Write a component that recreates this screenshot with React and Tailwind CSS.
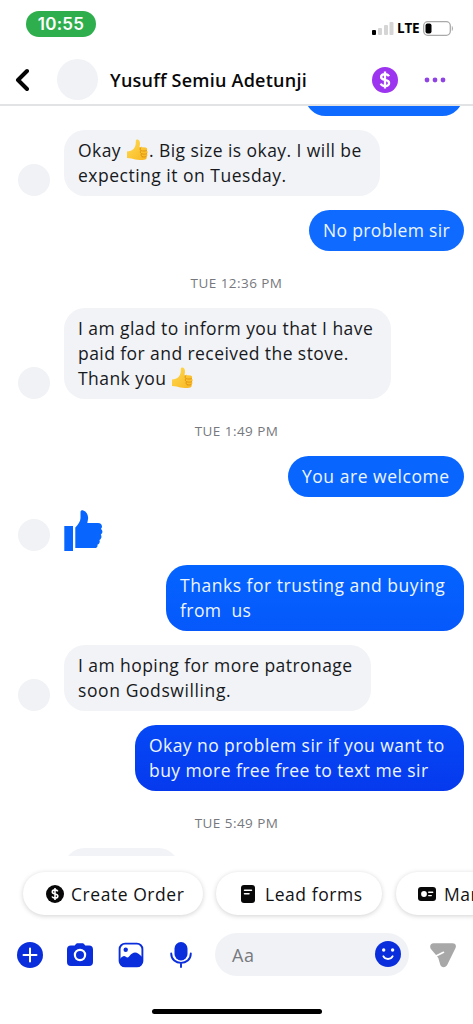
import clsx from 'clsx'

const thread = [
  { from: 'them', width: 'w-[316px]', gap: 'mt-[14px]', lines: [
    { text: 'Okay ', thumb: true, after: '. Big size is okay. I will be' },
    { text: 'expecting it on Tuesday.', tracking: 'tracking-[0.5px]' },
  ] },
  { from: 'me', width: 'w-[155px]', gap: 'mt-[14px]', color: 'bg-[#0f6bff]', lines: [
    { text: 'No problem sir', tracking: 'tracking-[0.34px]' },
  ] },
  { time: 'TUE 12:36 PM' },
  { from: 'them', width: 'w-[327px]', lines: [
    { text: 'I am glad to inform you that I have' },
    { text: 'paid for and received the stove.' },
    { text: 'Thank you ', thumb: true },
  ] },
  { time: 'TUE 1:49 PM' },
  { from: 'me', width: 'w-[176px]', color: 'bg-[#0866ff]', lines: [
    { text: 'You are welcome', tracking: 'tracking-[0.53px]' },
  ] },
  { like: true },
  { from: 'me', width: 'w-[298px]', gap: 'mt-[14px]', color: 'bg-linear-to-b from-[#0464ff] to-[#0658fb]', lines: [
    { text: 'Thanks for trusting and buying', tracking: 'tracking-[0.53px]' },
    { text: 'from  us' },
  ] },
  { from: 'them', width: 'w-[307px]', gap: 'mt-[14px]', lines: [
    { text: 'I am hoping for more patronage' },
    { text: 'soon Godswilling.', tracking: 'tracking-[0.6px]' },
  ] },
  { from: 'me', width: 'w-[329px]', gap: 'mt-[14px]', color: 'bg-linear-to-b from-[#0548f6] to-[#0639ed]', lines: [
    { text: 'Okay no problem sir if you want to' },
    { text: 'buy more free free to text me sir' },
  ] },
  { time: 'TUE 5:49 PM' },
]

function ThumbEmoji() {
  return (
    <svg viewBox="0 0 22 22" className="inline-block w-[23px] h-[22px] -mt-[4px]">
      <defs>
        <linearGradient id="thumb" x1="0" y1="0" x2="1" y2="1">
          <stop offset="0" stopColor="#ffdc55" />
          <stop offset="1" stopColor="#f8b51e" />
        </linearGradient>
      </defs>
      <path d="M.5 12.500c2.600-.2 5-1 6.500-2.600 2-2.200 2.400-4.300 2.300-7.600C9.200.7 10.400.2 11.400.6c2.200.8 2.500 4.200 1.600 7.400l6.200.5c1.500.2 2 2.200.9 3 1.400.8 1.400 2.600.2 3.200 1 .9.8 2.400-.4 2.900.7 1.100.2 2.500-1.100 2.800-3 .8-7 .8-10 .2-2.800-.5-4.400-1.500-8.300-1.500z" fill="url(#thumb)" />
      <path d="M20 11.600c-1.600.6-3.400.6-5 .2M20.200 14.800c-1.600.5-3.200.5-4.800.1M19.600 17.700c-1.400.4-2.700.4-4 .1M14.500 8.400c-1.200.7-1.500 2.400 0 3.200-1.200.9-.8 2.500.6 3.100-.9 1-.6 2.300.6 3" fill="none" stroke="#d98b0b" strokeWidth=".8" strokeLinecap="round" />
    </svg>
  )
}

function Avatar() {
  return <div className="w-8 h-8 rounded-full bg-[#f0f2f6] shrink-0" />
}

function Message({ item }) {
  if (item.time) {
    return (
      <div className="h-[57px] pt-[8px] flex items-start justify-center text-[13.5px] leading-[48px] tracking-[0.45px] text-[#76787d] shrink-0">
        {item.time}
      </div>
    )
  }
  if (item.like) {
    return (
      <div className="mt-[13px] h-[41px] pl-[18px] flex items-end gap-[14px] shrink-0">
        <Avatar />
        <svg viewBox="0 0 39 41" className="w-[39px] h-[41px]" fill="#0866ff">
          <path d="M.3 16H9v25H.3zM11.300 17.600c3-3.600 5.200-6.400 5.200-9.700V2C16.500.5 18 0 19.300.4c3.600 1.100 5.500 5.600 4.600 9.300L23.300 13H34c4.200 0 5 4.200 2.800 5.800 2.300 1.700 2 4.500 0 5.800 1.300 2 .6 4.300-1.400 5.400 1 2.200-.2 4.200-2 4.800.6 2-.9 3.200-2.600 3.200H11.300z" />
        </svg>
      </div>
    )
  }
  const mine = item.from === 'me'
  return (
    <div className={clsx('flex items-end shrink-0', item.gap, mine ? 'justify-end pr-[9px]' : 'pl-[18px] gap-[14px]')}>
      {!mine && <Avatar />}
      <div className={clsx(
        'px-[14px] py-[8px] rounded-[21px] text-[17.5px] leading-[25px] whitespace-pre',
        item.width,
        mine ? 'text-[#edf5ff]' : 'bg-[#f2f3f7] text-[#17191c]',
        item.color
      )}>
        {item.lines.map((line) => (
          <div key={line.text} className={clsx('h-[25px]', line.tracking || 'tracking-[0.43px]')}>
            {line.text}{line.thumb && <ThumbEmoji />}{line.after}
          </div>
        ))}
      </div>
    </div>
  )
}

function Dollar({ className }) {
  return (
    <svg viewBox="0 0 26 26" className={className}>
      <circle cx="13" cy="13" r="13" fill="currentColor" />
      <path d="M17 9.300c-.6-1.400-2-2.200-4-2.200-2.300 0-3.900 1.100-3.900 2.900 0 4.200 8 1.700 8 6 0 1.900-1.700 3-4.100 3-2.200 0-3.700-.9-4.300-2.400M13 4.500v17" fill="none" stroke="#fff" strokeWidth="2.300" />
    </svg>
  )
}

function Header() {
  return (
    <header className="h-[106px] shrink-0 border-b-2 border-[#e2e3e5] bg-white">
      <div className="h-[54px] pl-[26px] pr-[19px] pt-[11px] flex items-start justify-between">
        <div className="w-[70px] h-[26px] rounded-full bg-[#2fae4e] text-white text-[17px] leading-[26px] tracking-[0.3px] font-semibold text-center font-['Inter',sans-serif]">10:55</div>
        <div className="flex items-center h-[35px]">
          <svg viewBox="0 0 22 13" className="w-[22px] h-[13px]">
            <rect x="0" y="8" width="4" height="5" rx="1" fill="#000" />
            <rect x="6" y="6" width="4" height="7" rx="1" fill="#d5d5d5" />
            <rect x="12" y="3" width="4" height="10" rx="1" fill="#d5d5d5" />
            <rect x="17.500" y="0" width="4" height="13" rx="1" fill="#d5d5d5" />
          </svg>
          <span className="ml-[3px] w-[21px] text-[13.5px] font-bold text-black -tracking-[0.2px]">LTE</span>
          <svg viewBox="0 0 31 15" className="ml-[5px] w-[31px] h-[15px]">
            <rect x=".7" y=".7" width="26.600" height="13.600" rx="4" fill="none" stroke="#a9a9a9" strokeWidth="1.300" />
            <rect x="2.500" y="2.500" width="6" height="10" rx="2" fill="#000" />
            <path d="M28.800 5c1.500.5 1.500 4.500 0 5z" fill="#a9a9a9" />
          </svg>
        </div>
      </div>
      <div className="h-[51px] flex items-center">
        <svg viewBox="0 0 14 24" className="ml-[15px] w-[14px] h-[24px]">
          <path d="M12 3 3 12l9 9" fill="none" stroke="#050505" strokeWidth="4" strokeLinecap="round" strokeLinejoin="round" />
        </svg>
        <div className="ml-[28px] w-[41px] h-[41px] rounded-full bg-[#f0f2f6]" />
        <div className="ml-[12px] pt-[2px] w-[262px] text-[18px] font-semibold tracking-[0.23px] text-[#080809] whitespace-nowrap">Yusuff Semiu Adetunji</div>
        <Dollar className="w-[26px] h-[26px] text-[#9c34f0]" />
        <svg viewBox="0 0 22 6" className="ml-[26px] w-[22px] h-[6px]" fill="#8f43e6">
          <circle cx="3" cy="3" r="2.400" />
          <circle cx="11" cy="3" r="2.400" />
          <circle cx="19" cy="3" r="2.400" />
        </svg>
      </div>
    </header>
  )
}

const chip = 'h-[43px] rounded-full bg-white shadow-[0_1px_5px_rgba(0,0,0,0.18)] flex items-center shrink-0 text-[17.5px] tracking-[0.55px] text-[#111214] whitespace-nowrap'

function QuickActions() {
  return (
    <div className="h-[59px] pt-[16px] pl-[23px] flex shrink-0">
      <button className={clsx(chip, 'w-[180px] pl-[23px] gap-[8px]')}>
        <Dollar className="w-[18px] h-[18px] -mr-px text-[#080809]" />
        <span className="pt-px">Create Order</span>
      </button>
      <button className={clsx(chip, 'ml-[13px] w-[166px] pl-[25px] gap-[10px]')}>
        <svg viewBox="0 0 14 18" className="w-[14px] h-[18px]">
          <rect width="14" height="18" rx="3" fill="#080809" />
          <path d="M3.500 5.200h7M3.500 8.800h4.500" stroke="#fff" strokeWidth="1.500" strokeLinecap="round" />
        </svg>
        <span className="pt-px">Lead forms</span>
      </button>
      <button className={clsx(chip, 'ml-[14px] w-[180px] pl-[22px] gap-[8px]')}>
        <svg viewBox="0 0 18 14" className="w-[18px] h-[14px]">
          <rect width="18" height="14" rx="3" fill="#080809" />
          <circle cx="6" cy="7" r="2.900" fill="#fff" />
          <path d="M10.700 5.200h4M10.700 8.600h2.600" stroke="#fff" strokeWidth="1.400" strokeLinecap="round" />
        </svg>
        <span className="pt-px">Mar</span>
      </button>
    </div>
  )
}

function Composer() {
  return (
    <div className="mt-[18px] h-[43px] pl-[17px] flex items-center shrink-0 text-[#0a2edb]">
      <svg viewBox="0 0 26 26" className="w-[26px] h-[26px]">
        <circle cx="13" cy="13" r="13" fill="currentColor" />
        <path d="M13 6.500v13M6.500 13h13" stroke="#fff" strokeWidth="2" strokeLinecap="round" />
      </svg>
      <svg viewBox="0 0 26 23" className="ml-[24px] w-[26px] h-[23px]">
        <path d="M7.800 2.500C8.800.8 9.500.3 11 .3h4c1.500 0 2.200.5 3.200 2.200H22c2.700 0 4 1.300 4 4V19c0 2.700-1.300 4-4 4H4c-2.700 0-4-1.300-4-4V6.500c0-2.700 1.300-4 4-4z" fill="currentColor" />
        <circle cx="13" cy="12" r="5.100" fill="none" stroke="#fff" strokeWidth="2.200" />
      </svg>
      <svg viewBox="0 0 26 26" className="ml-[25px] w-[26px] h-[26px]">
        <rect x="1.600" y="1.600" width="22.800" height="22.800" rx="5.500" fill="#fff" stroke="currentColor" strokeWidth="1.900" />
        <circle cx="7.700" cy="7.700" r="2.200" fill="currentColor" />
        <path d="M2 17c2.500-2.800 4-3.500 5.500-2.400 1.500 1.100 2.400 1.300 3.800-.4 2-2.600 3.800-3.800 5.700-3.800 2.300 0 4.500 1.700 7.400 4.800v4c0 3.500-1.800 5.200-5.300 5.200H7c-3.300 0-5-1.700-5-5z" fill="currentColor" />
      </svg>
      <svg viewBox="0 0 22 26" className="ml-[26px] w-[22px] h-[26px]">
        <rect x="4.500" y="0" width="13" height="18.500" rx="6.500" fill="currentColor" />
        <path d="M1.200 11.500c0 12.500 19.600 12.500 19.600 0M11 21v4" fill="none" stroke="currentColor" strokeWidth="1.900" strokeLinecap="round" />
      </svg>
      <div className="ml-[23px] w-[194px] h-[43px] pl-[17px] pr-[8px] rounded-full bg-[#f0f2f6] flex items-center justify-between">
        <span className="pt-px text-[18px] tracking-[0.5px] text-[#77797e]">Aa</span>
        <svg viewBox="0 0 26 26" className="w-[26px] h-[26px] -mt-[2px]">
          <circle cx="13" cy="13" r="13" fill="currentColor" />
          <circle cx="8.700" cy="9" r="1.700" fill="#fff" />
          <circle cx="17.600" cy="9" r="1.700" fill="#fff" />
          <path d="M8.300 15.200c1.800 3.700 7.600 3.700 9.400 0" fill="none" stroke="#fff" strokeWidth="1.800" strokeLinecap="round" />
        </svg>
      </div>
      <svg viewBox="0 0 26 25" className="ml-[21px] mt-[2px] w-[26px] h-[25px]">
        <path d="M3.500.3h19c3 0 4.200 2.400 2.900 5l-8.100 16.500c-1.600 3.300-6 3.200-7.100-.3L8.300 15 6 12 1.300 6.600C-1 3.800.4.3 3.500.3z" fill="#a8a8a8" />
        <path d="M5.500 13.300l8-4" stroke="#fff" strokeWidth="1.600" strokeLinecap="round" />
      </svg>
    </div>
  )
}

export default function App() {
  return (
    <div className="w-[473px] h-[1024px] bg-white flex flex-col overflow-hidden font-['Open_Sans','Liberation_Sans',sans-serif]">
      <Header />
      <main className="h-[750px] shrink-0 flex flex-col overflow-hidden">
        <div className="h-[10px] pr-[10px] flex items-end justify-end overflow-hidden shrink-0">
          <div className="w-[158px] h-[41px] rounded-full bg-[#0f6bff] shrink-0" />
        </div>
        {thread.map((item, i) => <Message key={i} item={item} />)}
        <div className="ml-[64px] w-[115px] h-[41px] rounded-full bg-[#f2f3f7] shrink-0" />
      </main>
      <QuickActions />
      <Composer />
      <div className="mt-[33px] mx-auto w-[170px] h-[5px] rounded-full bg-black shrink-0" />
    </div>
  )
}
